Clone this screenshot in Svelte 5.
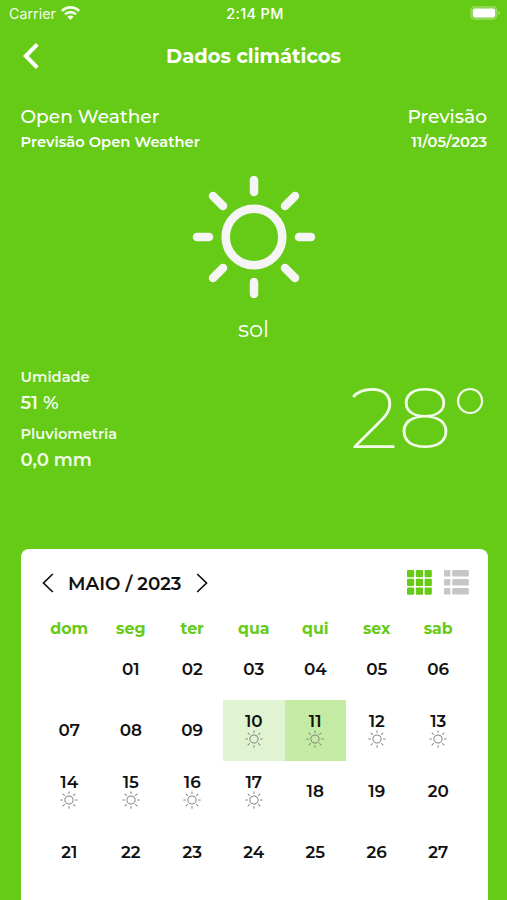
<script lang="ts">
  type Day = { label: string; sun?: boolean };

  let selected = $state('11');
  let view = $state<'grid' | 'list'>('grid');

  const today = '10';
  const weekdays = ['dom', 'seg', 'ter', 'qua', 'qui', 'sex', 'sab'];

  // maio de 2023 começa numa segunda-feira
  const days: Day[] = [{ label: '' }];
  for (let d = 1; d <= 27; d++) {
    days.push({ label: String(d).padStart(2, '0'), sun: d >= 10 && d <= 17 });
  }
</script>

{#snippet sunIcon()}
  <svg class="sun" viewBox="-62 -62 124 124" fill="none" stroke="currentColor" stroke-linecap="round">
    <circle r="28.3" />
    <path d="M0-57V-45M0 45V57M-57 0H-45M45 0H57M-41-41-31-31M31 31 41 41M-41 41-31 31M31-31 41-41" />
  </svg>
{/snippet}

<div class="screen">
  <div class="status">
    <div class="carrier">
      <span>Carrier</span>
      <svg class="wifi" width="19" height="14" viewBox="0 0 19 14">
        <g fill="none" stroke="#fff" stroke-width="2.7">
          <path d="M.9 5A12.2 12.2 0 0 1 18.1 5" />
          <path d="M4 8.4A7.8 7.8 0 0 1 15 8.4" />
        </g>
        <path d="M6.4 10.8A4.4 4.4 0 0 1 12.6 10.8L9.5 13.9Z" fill="#fff" />
      </svg>
    </div>
    <span class="time">2:14 PM</span>
    <svg class="battery" width="31" height="14" viewBox="0 0 31 14">
      <rect x=".8" y=".8" width="26" height="12.4" rx="3.8" fill="#fff" fill-opacity=".15" stroke="#fff" stroke-opacity=".25" stroke-width="1.4" />
      <rect x="2.8" y="2.6" width="22.4" height="8.8" rx="2.2" fill="#fff" />
      <path d="M28.5 5v4q1.6-.6 1.6-2t-1.6-2Z" fill="#fff" fill-opacity=".4" />
    </svg>
  </div>

  <header>
    <button class="back" aria-label="Voltar">
      <svg width="18" height="28" viewBox="0 0 18 28" fill="none" stroke="#fff" stroke-width="4">
        <path d="M15.2 2.4 3.8 14 15.2 25.6" />
      </svg>
    </button>
    <h1>Dados climáticos</h1>
  </header>

  <section class="source">
    <div>
      <div class="big">Open Weather</div>
      <div class="small">Previsão Open Weather</div>
    </div>
    <div class="right">
      <div class="big">Previsão</div>
      <div class="small">11/05/2023</div>
    </div>
  </section>

  <section class="condition">
    {@render sunIcon()}
    <span>sol</span>
  </section>

  <section class="metrics">
    <div class="readings">
      <div class="label">Umidade</div>
      <div class="value">51 %</div>
      <div class="label">Pluviometria</div>
      <div class="value">0,0 mm</div>
    </div>
    <div class="temp">28°</div>
  </section>

  <section class="calendar">
    <div class="toolbar">
      <button aria-label="Mês anterior">
        <svg width="12" height="20" viewBox="0 0 12 20" fill="none" stroke="#111" stroke-width="1.7"><path d="M10.8 1 1.5 10 10.8 19" /></svg>
      </button>
      <span class="month">MAIO / 2023</span>
      <button aria-label="Próximo mês">
        <svg width="12" height="20" viewBox="0 0 12 20" fill="none" stroke="#111" stroke-width="1.7"><path d="M1.2 1 10.5 10 1.2 19" /></svg>
      </button>
      <div class="views">
        <button class:active={view === 'grid'} aria-label="Grade" onclick={() => (view = 'grid')}>
          <svg width="25" height="25" viewBox="0 0 25 25" fill="currentColor">
            {#each [0, 8.8, 17.6] as y}
              {#each [0, 8.8, 17.6] as x}
                <rect {x} {y} width="7.2" height="7.2" rx="1" />
              {/each}
            {/each}
          </svg>
        </button>
        <button class:active={view === 'list'} aria-label="Lista" onclick={() => (view = 'list')}>
          <svg width="25" height="25" viewBox="0 0 25 25" fill="currentColor">
            {#each [0, 9, 18] as y}
              <rect x="0" {y} width="6.4" height="6.6" rx="1.2" />
              <rect x="8.2" {y} width="16.6" height="6.6" rx="1.2" />
            {/each}
          </svg>
        </button>
      </div>
    </div>

    <div class="week">
      {#each weekdays as name}
        <span>{name}</span>
      {/each}
    </div>

    <div class="days">
      {#each days as day}
        <button
          class="day"
          class:today={day.label === today}
          class:selected={day.label === selected}
          disabled={!day.label}
          onclick={() => (selected = day.label)}
        >
          <span>{day.label}</span>
          {#if day.sun}{@render sunIcon()}{/if}
        </button>
      {/each}
    </div>
  </section>
</div>

<style>
  :global(body) { background: #66cb17; }
  .screen {
    width: 507px; height: 900px; overflow: hidden; box-sizing: border-box;
    display: flex; flex-direction: column;
    background: #66cb17; color: #fff;
    font-family: Montserrat, Inter, "Open Sans", sans-serif;
  }
  button {
    background: none; border: 0; padding: 0; margin: 0; color: inherit;
    font: inherit; display: flex; align-items: center; justify-content: center;
  }
  svg { display: block; flex-shrink: 0; }

  .status {
    height: 27px; padding: 0 6px 0 9px; box-sizing: border-box; flex-shrink: 0;
    display: grid; grid-template-columns: 1fr auto 1fr; align-items: center;
    font: 400 14.3px/27px Inter, sans-serif;
  }
  .carrier { display: flex; align-items: center; gap: 5px; opacity: 0.92; }
  .wifi { margin-top: -2px; }
  .time { font-weight: 500; font-size: 14.4px; letter-spacing: 0.35px; }
  .battery { justify-self: end; margin-top: -1px; }

  header {
    height: 58px; flex-shrink: 0; padding: 0 22px; display: grid;
    grid-template-columns: 1fr auto 1fr; align-items: center;
  }
  .back { justify-self: start; }
  h1 { margin: 0; font-size: 19.5px; font-weight: 700; line-height: 28px; }

  .source {
    display: flex; justify-content: space-between; flex-shrink: 0;
    padding: 19px 20px 0 20.5px; height: 91px; box-sizing: border-box;
  }
  .right { text-align: right; }
  .big { font-size: 18.6px; font-weight: 500; line-height: 26px; }
  .small { font-size: 14.7px; font-weight: 600; line-height: 25px; }

  .condition { display: flex; flex-direction: column; align-items: center; height: 190px; flex-shrink: 0; }
  .condition .sun { width: 124px; height: 124px; stroke-width: 8.5; color: #f5f5f5; margin-top: -1px; }
  .condition span { font-size: 22.5px; line-height: 30px; margin-top: 15px; }

  .metrics {
    display: flex; justify-content: space-between; flex-shrink: 0;
    height: 183px; padding: 0 19px 0 20.5px; box-sizing: border-box; color: #f2fbe9;
  }
  .readings { margin-top: -1px; }
  .label { font-size: 14.6px; font-weight: 600; line-height: 24px; }
  .value { font-size: 18.1px; font-weight: 600; line-height: 27px; margin-bottom: 6px; }
  .temp { font-size: 86px; font-weight: 200; line-height: 104px; }

  .calendar {
    flex: 1; margin: 0 19px 0 21px; background: #fff; color: #111;
    border-radius: 8px 8px 0 0; padding: 19px 19px 0 17.5px;
  }
  .toolbar { display: flex; align-items: center; height: 28px; padding: 0 0 0 3.5px; }
  .toolbar > button { margin-top: 1px; }
  .month { width: 114px; margin: 3px 14px 0 14px; font-size: 18.3px; font-weight: 600; white-space: nowrap; }
  .views { display: flex; gap: 12px; margin-left: auto; color: #c6c6c6; }
  .views .active { color: #66cb17; }

  .week, .days { display: grid; grid-template-columns: repeat(7, 1fr); text-align: center; }
  .week { height: 42.5px; line-height: 66px; font-size: 15.8px; font-weight: 700; color: #66cb17; }
  .days { grid-auto-rows: 61.1px; }
  .day { flex-direction: column; font-size: 16.8px; font-weight: 600; line-height: 20px; }
  .day .sun { width: 18px; height: 18px; stroke-width: 7; color: #858585; margin-bottom: 2px; margin-top: -1px; }
  .today { background: #e0f4d1; }
  .selected { background: #c3eba4; }
</style>
